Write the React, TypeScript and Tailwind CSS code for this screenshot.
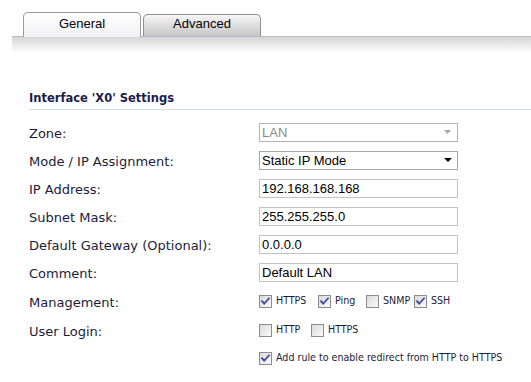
import { ReactNode } from 'react';

const LABEL_FONT = { fontFamily: 'Tahoma, "DejaVu Sans", sans-serif' };
const SMALL_FONT = { fontFamily: 'Tahoma, "DejaVu Sans Condensed", "DejaVu Sans", sans-serif' };
const FIELD_FONT = { fontFamily: '"Liberation Sans", Arial, sans-serif' };

const CheckBox = ({ checked }: { checked: boolean }) => (
  <svg width="13" height="13" viewBox="0 0 13 13" className="shrink-0">
    <defs>
      <linearGradient id="cbg" x1="0" y1="0" x2="1" y2="1">
        <stop offset="0" stopColor="#d9d9d9" />
        <stop offset="1" stopColor="#fbfbfb" />
      </linearGradient>
    </defs>
    <rect x="0.5" y="0.5" width="12" height="12" fill="url(#cbg)" stroke="#8c8c8c" />
    {checked && (
      <path d="M3 6.2 L5.2 8.6 L10 3.4" fill="none" stroke="#3f4f9e" strokeWidth="1.8" strokeLinecap="square" />
    )}
  </svg>
);

const Check = ({ checked, label, className = '' }: { checked: boolean; label: string; className?: string }) => (
  <span className={`flex items-center gap-[4px] ${className}`}>
    <CheckBox checked={checked} />
    <span className="text-[10.6px] text-[#1c1c3a]" style={SMALL_FONT}>{label}</span>
  </span>
);

const Row = ({ label, children, h = 'h-[28px]' }: { label?: string; children: ReactNode; h?: string }) => (
  <div className={`flex items-center ${h}`}>
    <div className="w-[259px] shrink-0 pl-[29px] text-[13px] text-[#1c1c3a] pt-[3px]" style={LABEL_FONT}>{label}</div>
    <div className="flex items-center">{children}</div>
  </div>
);

const TextBox = ({ value }: { value: string }) => (
  <div
    className="w-[199px] h-[19px] border border-[#c2c2c2] bg-white px-[2px] text-[13px] leading-[17px] text-black"
    style={FIELD_FONT}
  >
    {value}
  </div>
);

export default function App() {
  return (
    <div className="w-[531px] h-[382px] bg-white overflow-hidden">
      {/* tabs */}
      <div className="pt-[12px] pl-[12px]">
        <div className="flex items-end gap-[2px] pl-[11px] border-b border-[#b9b9c9]">
          <div
            className="w-[118px] h-[25px] -mb-px border border-b-0 border-[#9c9c9c] rounded-t-[5px] bg-gradient-to-b from-white to-[#f1f1f4] flex items-center justify-center text-[13px] text-black pb-[2px]"
            style={FIELD_FONT}
          >
            General
          </div>
          <div
            className="w-[118px] h-[22px] border border-b-0 border-[#8f8f8f] rounded-t-[5px] bg-gradient-to-b from-[#f6f6f6] to-[#c6c6c6] flex items-center justify-center text-[13px] text-black pb-[4px]"
            style={FIELD_FONT}
          >
            Advanced
          </div>
        </div>
        <div className="h-[16px] bg-gradient-to-b from-[#d6d6d6] to-white" />
      </div>

      {/* section heading */}
      <div className="mt-[37px] ml-[29px] border-b border-[#d5dbe5] pb-[2px]">
        <div className="text-[11.5px] font-bold text-[#1c1c4c]" style={LABEL_FONT}>
          Interface 'X0' Settings
        </div>
      </div>

      <div className="mt-[8px]">
        <Row label="Zone:">
          <div
            className="w-[199px] h-[19px] border border-[#b4b4b4] bg-white pl-[2px] pr-[6px] flex items-center justify-between text-[13px] text-[#8a8a8a]"
            style={FIELD_FONT}
          >
            <span>LAN</span>
            <svg width="7" height="4" viewBox="0 0 7 4"><path d="M0 0h7L3.5 4z" fill="#a8a8a8" /></svg>
          </div>
        </Row>
        <Row label="Mode / IP Assignment:">
          <div
            className="w-[199px] h-[19px] border border-[#a8a8a8] bg-white pl-[2px] pr-[5px] flex items-center justify-between text-[13px] text-black"
            style={FIELD_FONT}
          >
            <span>Static IP Mode</span>
            <svg width="8" height="4" viewBox="0 0 8 4"><path d="M0 0h8L4 4z" fill="#000" /></svg>
          </div>
        </Row>
        <Row label="IP Address:">
          <TextBox value="192.168.168.168" />
        </Row>
        <Row label="Subnet Mask:">
          <TextBox value="255.255.255.0" />
        </Row>
        <Row label="Default Gateway (Optional):">
          <TextBox value="0.0.0.0" />
        </Row>
        <Row label="Comment:">
          <TextBox value="Default LAN" />
        </Row>
        <Row label="Management:" h="h-[30px]">
          <Check checked label="HTTPS" className="w-[59px]" />
          <Check checked label="Ping" className="w-[48px]" />
          <Check checked={false} label="SNMP" className="w-[48px]" />
          <Check checked label="SSH" />
        </Row>
        <Row label="User Login:">
          <Check checked={false} label="HTTP" className="w-[52px]" />
          <Check checked={false} label="HTTPS" />
        </Row>
        <Row>
          <Check checked label="Add rule to enable redirect from HTTP to HTTPS" />
        </Row>
      </div>
    </div>
  );
}
